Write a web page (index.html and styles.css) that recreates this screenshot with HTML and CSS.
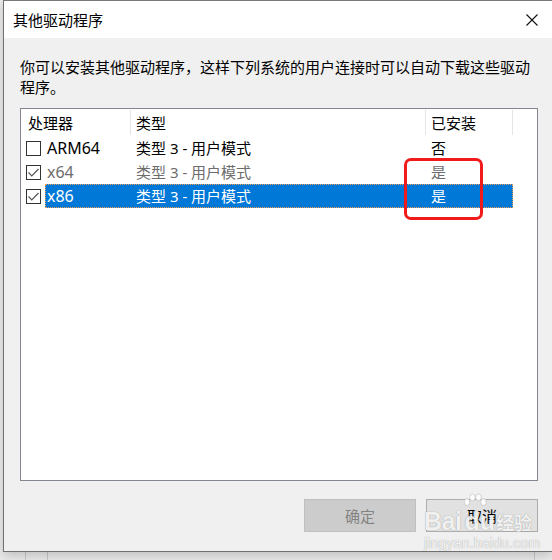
FILE: index.html
```html
<!DOCTYPE html>
<html lang="zh-CN">
<head>
<meta charset="utf-8">
<title>其他驱动程序</title>
<link rel="stylesheet" href="styles.css">
</head>
<body>
<div class="desktop">
  <div class="window">
    <div class="titlebar">
      <span class="title">其他驱动程序</span>
      <svg class="close" width="12" height="12" viewBox="0 0 12 12"><path d="M0.5 0.5 L11.5 11.5 M11.5 0.5 L0.5 11.5" stroke="#111" stroke-width="1.1" fill="none"/></svg>
    </div>
    <div class="content">
      <p class="desc">你可以安装其他驱动程序，这样下列系统的用户连接时可以自动下载这些驱动程序。</p>
      <div class="listbox">
        <div class="header">
          <div class="hcell c1">处理器</div>
          <div class="hcell c2">类型</div>
          <div class="hcell c3">已安装</div>
        </div>
        <div class="row">
          <span class="check"></span>
          <div class="sel">
            <div class="cell c1">ARM64</div>
            <div class="cell c2">类型 3 - 用户模式</div>
            <div class="cell c3">否</div>
          </div>
        </div>
        <div class="row disabled">
          <span class="check"><svg width="13" height="13" viewBox="0 0 13 13"><polyline points="1.5,6.5 4.8,9.8 11.5,3" stroke="#555" stroke-width="1.2" fill="none"/></svg></span>
          <div class="sel">
            <div class="cell c1">x64</div>
            <div class="cell c2">类型 3 - 用户模式</div>
            <div class="cell c3">是</div>
          </div>
        </div>
        <div class="row selected">
          <span class="check"><svg width="13" height="13" viewBox="0 0 13 13"><polyline points="1.5,6.5 4.8,9.8 11.5,3" stroke="#555" stroke-width="1.2" fill="none"/></svg></span>
          <div class="sel">
            <div class="cell c1">x86</div>
            <div class="cell c2">类型 3 - 用户模式</div>
            <div class="cell c3">是</div>
          </div>
        </div>
      </div>
      <div class="buttons">
        <button class="btn disabled-btn">确定</button>
        <button class="btn">取消</button>
      </div>
    </div>
  </div>
  <div class="below">
    <span class="gap1"></span><span class="gap2"></span><span class="gap3"></span>
  </div>
  <div class="mark"></div>
  <div class="watermark">
    <div class="wm-top">
      <span class="wm-bai">Bai</span>
      <span class="wm-du">
        <svg class="paw" width="26" height="16" viewBox="0 0 26 16">
          <ellipse cx="5" cy="9" rx="2.8" ry="3.5" fill="rgba(255,255,255,0.85)" stroke="rgba(120,120,120,0.35)" stroke-width="0.8"/>
          <ellipse cx="10.5" cy="4.5" rx="2.8" ry="3.5" fill="rgba(255,255,255,0.85)" stroke="rgba(120,120,120,0.35)" stroke-width="0.8"/>
          <ellipse cx="16.5" cy="4.5" rx="2.8" ry="3.5" fill="rgba(255,255,255,0.85)" stroke="rgba(120,120,120,0.35)" stroke-width="0.8"/>
          <ellipse cx="21.5" cy="9" rx="2.8" ry="3.5" fill="rgba(255,255,255,0.85)" stroke="rgba(120,120,120,0.35)" stroke-width="0.8"/>
        </svg>du</span>
      <span class="wm-jy">经验</span>
    </div>
    <div class="wm-url">jingyan.baidu.com</div>
  </div>
</div>
</body>
</html>
```
FILE: styles.css
```css
* { box-sizing: border-box; }
html, body { margin: 0; padding: 0; }
body {
  width: 552px;
  height: 560px;
  overflow: hidden;
  background: #eaeaea;
  font-family: "Noto Sans", "Noto Sans CJK SC", sans-serif;
}
.desktop {
  position: relative;
  width: 552px;
  height: 560px;
  overflow: hidden;
  background: #ebebeb;
  padding-left: 3px;
}
.window {
  width: 549px;
  height: 552px;
  border: 1px solid #6f6f6f;
  border-right: none;
  border-top-color: #7a7a7a;
  background: #f0f0f0;
  display: flex;
  flex-direction: column;
  box-shadow: 0 4px 10px rgba(0,0,0,0.18);
  position: relative;
  z-index: 1;
}
.titlebar {
  height: 37px;
  background: #ffffff;
  display: flex;
  align-items: center;
  justify-content: space-between;
  padding: 0 14px 0 9px;
}
.title {
  font-size: 15px;
  line-height: 20px;
  color: #000;
}
.close { display: block; margin-top: 1px; }
.content {
  flex: 1;
  padding: 19px 14px 0 16px;
  display: flex;
  flex-direction: column;
}
.desc {
  margin: 0;
  font-size: 15px;
  line-height: 20px;
  color: #000;
  height: 40px;
}
.listbox {
  margin-top: 11px;
  height: 373px;
  border: 1px solid #828790;
  background: #ffffff;
}
.header {
  display: flex;
  height: 27px;
}
.hcell {
  font-size: 15px;
  line-height: 26px;
  color: #000;
  border-right: 1px solid #e5e5e5;
  margin-top: 1px;
  height: 25px;
  padding-left: 5px;
}
.hcell.c1 { width: 110px; padding-left: 7px; }
.hcell.c2 { width: 295px; }
.hcell.c3 { width: 87px; }
.row {
  display: flex;
  align-items: center;
  height: 24px;
  padding-left: 5px;
  font-size: 15px;
  color: #000;
}
.check {
  width: 15px;
  height: 15px;
  border: 1px solid #333333;
  background: #fff;
  display: flex;
  align-items: center;
  justify-content: center;
  margin-right: 4px;
}
.check svg { display: block; }
.sel {
  display: flex;
  height: 24px;
  align-items: center;
}
.cell { line-height: 24px; white-space: nowrap; }
.cell.c1 { width: 86px; padding-left: 2px; font-size: 16px; }
.cell.c2 { width: 295px; padding-left: 5px; }
.cell.c3 { width: 87px; padding-left: 5px; }
.row.disabled { color: #6d6d6d; }
.row.selected .sel {
  background: #0078d7;
  color: #ffffff;
  outline: 1px dotted #f0a050;
  outline-offset: -1px;
}
.buttons {
  margin-top: 18px;
  display: flex;
  justify-content: flex-end;
  gap: 10px;
}
.btn {
  width: 112px;
  height: 33px;
  font-family: "Noto Sans CJK SC", sans-serif;
  font-size: 15px;
  background: #e1e1e1;
  border: 1px solid #adadad;
  color: #000;
  padding: 0;
}
.btn.disabled-btn {
  background: #cccccc;
  border-color: #bfbfbf;
  color: #838383;
}
.below {
  height: 8px;
  display: flex;
}
.below span { display: block; height: 8px; border-right: 1px solid #c9c9c9; }
.gap1 { width: 23px; }
.gap2 { width: 22px; }
.gap3 { width: 487px; }
.mark {
  position: absolute;
  left: 404px;
  top: 158px;
  width: 79px;
  height: 62px;
  border: 3px solid #f21b1b;
  border-radius: 7px;
  z-index: 3;
}
.watermark {
  position: absolute;
  left: 424px;
  top: 497px;
  z-index: 4;
  color: rgba(255,255,255,0.88);
  text-shadow: 0 0 1px rgba(80,80,80,0.6);
  font-family: "Liberation Sans", sans-serif;
}
.wm-top {
  display: flex;
  align-items: flex-end;
  height: 36px;
}
.wm-bai { font-size: 25px; font-weight: bold; line-height: 24px; letter-spacing: -0.5px; }
.wm-du {
  position: relative;
  font-size: 25px;
  font-weight: bold;
  line-height: 24px;
  margin-left: 3px;
}
.paw { position: absolute; left: -2px; top: -16px; }
.wm-jy {
  font-family: "Noto Sans CJK SC", sans-serif;
  font-size: 18px;
  font-weight: bold;
  line-height: 22px;
  margin-left: 1px;
}
.wm-url {
  font-size: 14px;
  line-height: 14px;
  margin-top: 3px;
  letter-spacing: 0.2px;
}
```
